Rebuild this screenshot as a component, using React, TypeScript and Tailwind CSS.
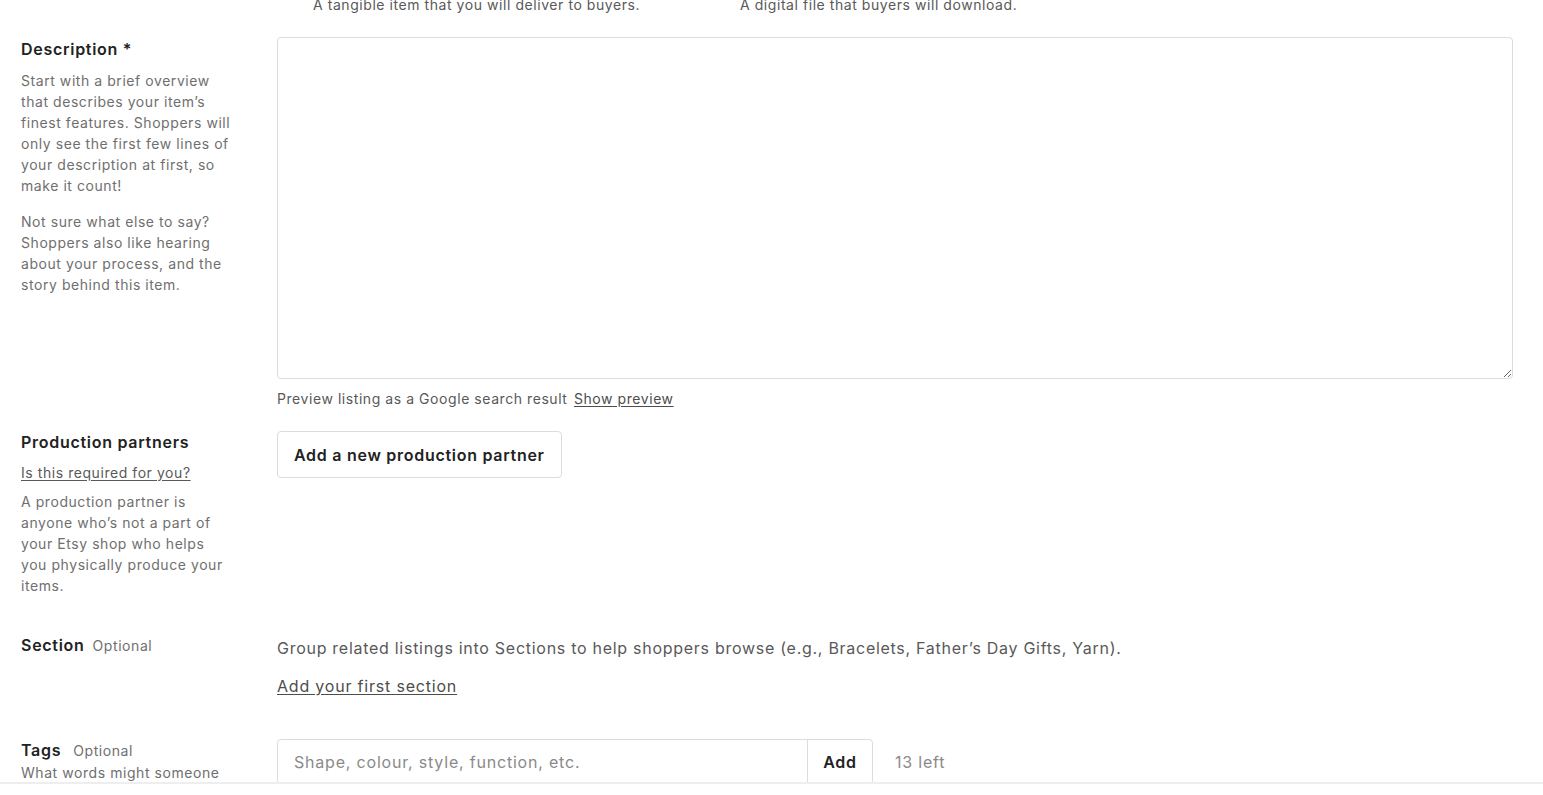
import React from "react";

const labelCls =
  "text-[16px] leading-6 font-semibold tracking-[0.045em] text-[#222222]";
const helpCls = "text-[14px] leading-[21px] tracking-[0.04em] text-[#6f6f6f]";
const optCls = "text-[14px] tracking-[0.04em] text-[#6f6f6f]";

const App = () => {
  return (
    <div className="flex h-[795px] flex-col bg-white font-['Inter','Noto_Sans',sans-serif] text-[#222222]">
      <div className="h-[782px] overflow-hidden">
        {/* Listing type hints (scrolled partly out of view) */}
        <div className="-mt-[6px] flex pl-[277px] text-[14px] leading-[21px] tracking-[0.04em] text-[#595959]">
          <div className="w-[427px] pl-9">
            A tangible item that you will deliver to buyers.
          </div>
          <div className="pl-9">A digital file that buyers will download.</div>
        </div>

        {/* Description */}
        <div className="mt-[22px] flex pl-[21px] pr-[30px]">
          <div className="w-[256px] shrink-0 pr-[44px]">
            <div className={labelCls}>Description *</div>
            <p className={`${helpCls} mt-[9px]`}>
              Start with a brief overview that describes your item’s finest
              features. Shoppers will only see the first few lines of your
              description at first, so make it count!
            </p>
            <p className={`${helpCls} mt-[15px]`}>
              Not sure what else to say? Shoppers also like hearing about your
              process, and the story behind this item.
            </p>
          </div>
          <div className="flex-1">
            <textarea className="block h-[342px] w-full resize-y rounded-[4px] border border-[#dcdcdc] bg-white p-3 outline-none" />
            <div className="mt-[9px] text-[14px] leading-[21px] tracking-[0.04em] text-[#595959]">
              Preview listing as a Google search result{" "}
              <span className="ml-0.5 text-[#4d4d4d] underline underline-offset-2">
                Show preview
              </span>
            </div>
          </div>
        </div>

        {/* Production partners */}
        <div className="mt-[21px] flex pl-[21px] pr-[30px]">
          <div className="w-[256px] shrink-0 pr-[44px]">
            <div className={labelCls}>Production partners</div>
            <div className="mt-[8px] text-[14px] leading-[21px] tracking-[0.04em] text-[#595959] underline underline-offset-2">
              Is this required for you?
            </div>
            <p className={`${helpCls} mt-[8px]`}>
              A production partner is anyone who’s not a part of your Etsy shop
              who helps you physically produce your items.
            </p>
          </div>
          <div className="flex-1 pt-px">
            <button className="h-[47px] rounded-[4px] border border-[#dcdcdc] bg-white px-4 text-[16px] font-semibold tracking-[0.045em] text-[#222222]">
              Add a new production partner
            </button>
          </div>
        </div>

        {/* Section */}
        <div className="mt-[37px] flex pl-[21px] pr-[30px]">
          <div className="w-[256px] shrink-0 pr-[44px]">
            <span className={labelCls}>Section</span>
            <span className={`${optCls} ml-2`}>Optional</span>
          </div>
          <div className="flex-1 pt-[3px]">
            <p className="text-[16px] leading-6 tracking-[0.045em] text-[#595959]">
              Group related listings into Sections to help shoppers browse
              (e.g., Bracelets, Father’s Day Gifts, Yarn).
            </p>
            <div className="mt-[14px] text-[16px] leading-6 tracking-[0.05em] text-[#4d4d4d] underline underline-offset-2">
              Add your first section
            </div>
          </div>
        </div>

        {/* Tags */}
        <div className="mt-[40px] flex pl-[21px] pr-[30px]">
          <div className="w-[256px] shrink-0 pr-[44px]">
            <div>
              <span className={labelCls}>Tags</span>
              <span className={`${optCls} ml-3`}>Optional</span>
            </div>
            <p className={helpCls}>
              What words might someone use to search for your listings?
            </p>
          </div>
          <div className="flex flex-1 items-start pt-px">
            <div className="flex h-[46px] rounded-[4px] border border-[#dcdcdc]">
              <input
                className="w-[529px] bg-transparent px-4 text-[16px] tracking-[0.05em] text-[#222222] outline-none placeholder:text-[#8a8a8a]"
                placeholder="Shape, colour, style, function, etc."
              />
              <button className="w-[65px] border-l border-[#dcdcdc] text-[16px] font-semibold tracking-[0.045em] text-[#222222]">
                Add
              </button>
            </div>
            <span className="ml-[22px] text-[16px] leading-[46px] tracking-[0.05em] text-[#8a8a8a]">
              13 left
            </span>
          </div>
        </div>
      </div>
      <div className="flex-1 border-t-2 border-[#eeeeee]" />
    </div>
  );
};

export default App;
